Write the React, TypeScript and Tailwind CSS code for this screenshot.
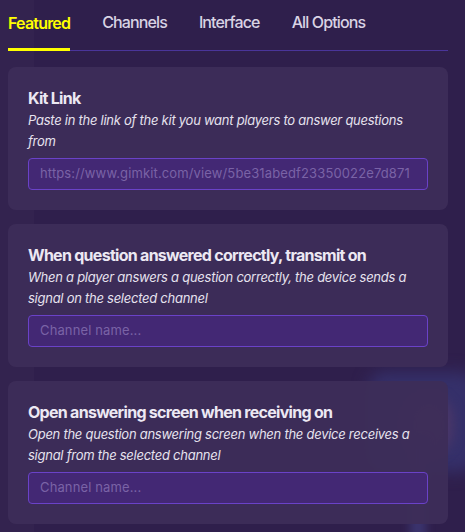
import React from "react";

const cards = [
  {
    title: "Kit Link",
    desc: "Paste in the link of the kit you want players to answer questions from",
    placeholder: "https://www.gimkit.com/view/5be31abedf23350022e7d871",
  },
  {
    title: "When question answered correctly, transmit on",
    desc: "When a player answers a question correctly, the device sends a signal on the selected channel",
    placeholder: "Channel name...",
  },
  {
    title: "Open answering screen when receiving on",
    desc: "Open the question answering screen when the device receives a signal from the selected channel",
    placeholder: "Channel name...",
  },
];

export default function App() {
  return (
    <div
      className="relative w-[465px] h-[532px] overflow-hidden bg-[#2f1f4c]"
      style={{ fontFamily: "Inter, 'Noto Sans', sans-serif" }}
    >
      {/* blurred backdrop */}
      <div className="absolute left-0 top-0 w-[34px] h-full bg-[#33234f]" />
      <div className="absolute left-[368px] top-[372px] w-[110px] h-[100px] rounded-[18px] bg-[#35306a] blur-[8px]" />
      <div className="absolute left-[405px] top-[395px] w-[48px] h-[60px] rounded-full bg-[#4b3768] blur-[6px]" />
      <div className="absolute left-[410px] top-[440px] w-[16px] h-[100px] bg-[#3b346e] blur-[4px]" />

      <div className="relative px-[8px]">
        <div className="flex gap-[32px] border-b border-[#4a359a] h-[51px] items-start pt-[11px] w-[440px]">
          <div className="relative h-full">
            <span className="text-[16px] font-semibold tracking-[-0.05em] text-[#ffff00] leading-[22px]">Featured</span>
            <div className="absolute left-0 right-0 bottom-[-1px] h-[3px] bg-[#ffff00]" />
          </div>
          <span className="text-[16px] font-medium tracking-[-0.055em] text-[#d9d3e4] leading-[22px]">Channels</span>
          <span className="text-[16px] font-medium tracking-[-0.055em] text-[#d9d3e4] leading-[22px]">Interface</span>
          <span className="text-[16px] font-medium tracking-[-0.055em] text-[#d9d3e4] leading-[22px]">All Options</span>
        </div>

        <div className="flex flex-col gap-[14px] mt-[16px] w-[440px]">
          {cards.map((c) => (
            <div key={c.title} className="rounded-[8px] bg-[#3d2d58]/95 p-[20px]">
              <div className="text-[16px] font-bold tracking-[-0.045em] text-[#ece8f3] leading-[23px]">{c.title}</div>
              <div className="text-[13px] italic tracking-[-0.02em] text-[#e6e2ee] leading-[21px]">{c.desc}</div>
              <div className="mt-[6px] h-[32px] rounded-[4px] border border-[#6a42c8] bg-[#432874] flex items-center px-[11px]">
                <span className="text-[13px] tracking-[0.01em] text-[#7a63a6] whitespace-nowrap">{c.placeholder}</span>
              </div>
            </div>
          ))}
        </div>
      </div>
    </div>
  );
}
